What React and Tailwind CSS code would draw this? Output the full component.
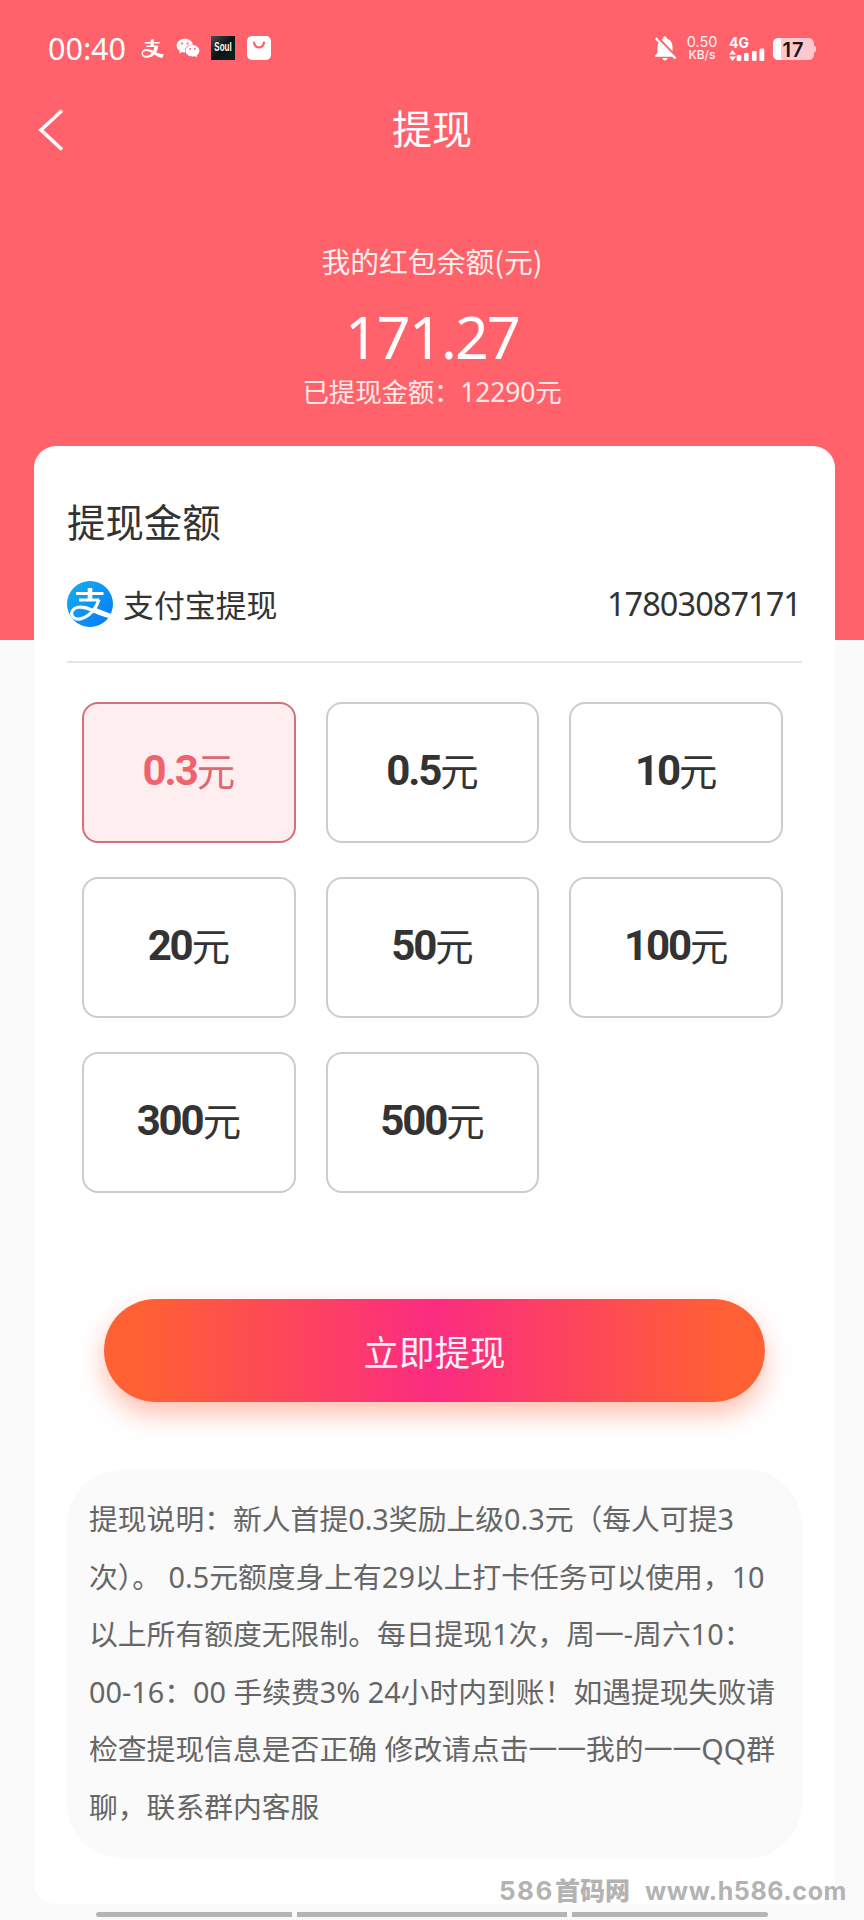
import React from "react";
import { AiOutlineAlipay, AiFillWechat } from "react-icons/ai";
import { MdNotificationsOff } from "react-icons/md";

const amounts = ["0.3", "0.5", "10", "20", "50", "100", "300", "500"];

const notes = [
  "提现说明：新人首提0.3奖励上级0.3元（每人可提3",
  "次）。 0.5元额度身上有29以上打卡任务可以使用，10",
  "以上所有额度无限制。每日提现1次，周一-周六10：",
  "00-16：00 手续费3% 24小时内到账！如遇提现失败请",
  "检查提现信息是否正确 修改请点击一一我的一一QQ群",
  "聊，联系群内客服",
];

function AlipayLogo() {
  return (
    <svg className="h-[46px] w-[46px] shrink-0" viewBox="0 0 46 46" fill="none">
      <defs>
        <linearGradient id="ali" x1="0" y1="0" x2="1" y2="1">
          <stop offset="0" stopColor="#12b0ee" />
          <stop offset="1" stopColor="#0878fa" />
        </linearGradient>
        <clipPath id="disc">
          <circle cx="23" cy="23" r="23" />
        </clipPath>
      </defs>
      <circle cx="23" cy="23" r="23" fill="url(#ali)" />
      <g clipPath="url(#disc)" stroke="#fff">
        <path d="M23 7v12" strokeWidth="4.600" />
        <path d="M9 12.500h27.500M12 19h20" strokeWidth="2.800" />
        <path d="M32 18.500c-2 6.500-6 12-10.500 15.500C16 38.300 10 39 6.800 36.800c-4-3.200-2.200-9.300 4.300-10.500 5.500-1 10.500 1.300 17 4.200 6 2.800 11 4.300 18 6" strokeWidth="3.200" />
        <path d="M26 28c6 3.200 13 5.500 20 7.500" strokeWidth="4.400" />
      </g>
    </svg>
  );
}

function StatusBar() {
  return (
    <div className="flex h-[96px] items-center pl-[48px] pr-[48px] text-white">
      <span className="w-[80px] text-[30.500px] leading-none">00:40</span>
      <AiOutlineAlipay className="ml-[12px] h-[25px] w-[25px]" />
      <AiFillWechat className="ml-[10px] h-[26px] w-[26px]" />
      <span className="ml-[10px] flex h-[24px] w-[24px] items-center justify-center bg-gradient-to-br from-[#4a4d4e] via-[#0d1415] to-[#10201f] font-['Liberation_Sans',sans-serif] text-[8px] font-bold leading-none">
        <span className="scale-y-150">Soul</span>
      </span>
      <svg className="ml-[12px] h-[24px] w-[24px]" viewBox="0 0 24 24">
        <rect width="24" height="24" rx="5" fill="#fff" />
        <path d="M7 6.500c1 6.500 9 6.500 10 0" fill="none" stroke="#ff626b" strokeWidth="2.200" strokeLinecap="round" />
      </svg>
      <div className="ml-auto flex items-center">
        <MdNotificationsOff className="h-[30px] w-[30px]" />
        <div className="ml-[5px] flex w-[34px] flex-col items-center font-['Inter',sans-serif] leading-none text-[#fff0f0]">
          <span className="text-[14.500px] leading-[13px]">0.50</span>
          <span className="text-[12px] font-medium leading-[13px]">KB/s</span>
        </div>
        <svg className="ml-[10px] h-[26px] w-[36px] overflow-visible" viewBox="0 -2 36 26" fill="#fff">
          <text x="0" y="11" fontSize="14" fontWeight="700" textLength="20" fontFamily="Inter, sans-serif">4G</text>
          <path d="M0 17.500L3.500 13L7 17.500ZM0 19.500L3.500 24L7 19.500Z" />
          <rect x="7.700" y="18" width="4.600" height="6" rx="1.200" />
          <rect x="15" y="16" width="4.600" height="8" rx="1.200" />
          <rect x="23" y="14" width="4.600" height="10" rx="1.200" />
          <rect x="30.500" y="11.500" width="4.800" height="12.500" rx="1.200" />
        </svg>
        <svg className="ml-[8px] mt-[2px] h-[22px] w-[43px]" viewBox="0 0 43 22">
          <rect width="41" height="22" rx="5.500" fill="#ffc8cd" />
          <path d="M41 7.500c3 1 3 6 0 7z" fill="#ffc8cd" />
          <path d="M5.500 0H8v22H5.500A5.500 5.500 0 0 1 0 16.500v-11A5.500 5.500 0 0 1 5.500 0z" fill="#fff" />
          <text x="9.500" y="18.500" fontSize="20" fontWeight="600" textLength="21" fill="#241316" fontFamily="Inter, sans-serif">17</text>
        </svg>
      </div>
    </div>
  );
}

export default function App() {
  return (
    <div className="relative h-[1920px] w-[864px] overflow-hidden bg-[#fafafa] font-['Noto_Sans','Noto_Sans_CJK_SC',sans-serif] text-[#333]">
      <header className="h-[640px] bg-[#ff626b] text-white">
        <StatusBar />
        <div className="grid h-[68px] grid-cols-[1fr_auto_1fr] items-center">
          <svg className="ml-[38px] h-[42px] w-[26px]" viewBox="0 0 26 42" fill="none" stroke="#fff" strokeWidth="3.600">
            <path d="M24 1.500L3 21L24 40.500" />
          </svg>
          <h1 className="pb-[6px] font-['Noto_Sans_CJK_SC',sans-serif] text-[40px] leading-none">提现</h1>
        </div>
        <div className="flex flex-col items-center pt-[77px]">
          <p className="font-['Noto_Sans_CJK_SC',sans-serif] text-[28.800px] leading-[40px] text-[#fff0ee]">我的红包余额(元)</p>
          <p className="mt-[19px] text-[59px] leading-[72px] tracking-[-1.700px]">171.27</p>
          <p className="text-[26.500px] leading-[40px] tracking-[-0.200px] text-[#ffe9e6]">已提现金额：12290元</p>
        </div>
      </header>

      <main className="relative ml-[34px] mr-[29px] -mt-[194px] h-[1458px] rounded-[22px] bg-white px-[33px] pt-[49px]">
        <h2 className="font-['Noto_Sans_CJK_SC',sans-serif] text-[38.400px] leading-[50px]">提现金额</h2>
        <div className="mt-[27px] flex h-[64px] items-center">
          <AlipayLogo />
          <span className="ml-[10px] font-['Noto_Sans_CJK_SC',sans-serif] text-[30.900px] leading-none">支付宝提现</span>
          <span className="ml-auto mr-[1px] text-[32.500px] leading-none tracking-[-0.950px]">17803087171</span>
        </div>
        <div className="mt-[25px] h-[2px] bg-[#e5e5e5]" />

        <div className="ml-[15px] mt-[39px] grid w-[701px] grid-cols-3 gap-x-[30px] gap-y-[34px]">
          {amounts.map((a, i) => (
            <button
              key={a}
              className={
                "flex h-[141px] items-center justify-center rounded-[16px] border-2 pb-[3px] leading-none " +
                (i === 0 ? "border-[#d46f7b] bg-[#ffeef0] text-[#dc6873]" : "border-[#ccc] bg-white text-[#333]")
              }
            >
              <span className={"font-['Roboto',sans-serif] text-[42px] font-bold tracking-[-2.100px] " + (i === 0 ? "text-[#f0626d]" : "")}>{a}</span>
              <span className="pb-[4px] font-['Noto_Sans_CJK_SC',sans-serif] text-[38.400px]">元</span>
            </button>
          ))}
        </div>

        <button className="ml-[37px] mt-[106px] flex h-[103px] w-[661px] items-center justify-center rounded-full bg-[linear-gradient(90deg,#ff6034_0%,#ff6034_6%,#fb2c81_50%,#ff6034_94%,#ff6034_100%)] font-['Noto_Sans_CJK_SC',sans-serif] text-[35.500px] leading-none text-[#fff0fa] shadow-[0_12px_26px_rgba(255,96,52,0.4)]">
          立即提现
        </button>

        <section className="mt-[68px] h-[388px] w-[735px] rounded-[54px] bg-[#fafafa] pl-[22px] pt-[20px] text-[28.800px] leading-[57.600px] text-[#666]">
          {notes.map((line) => (
            <p key={line} className="whitespace-pre">{line}</p>
          ))}
        </section>
      </main>

      <div className="absolute left-[499px] top-[1874px] flex items-center whitespace-pre font-['Inter','Noto_Sans_CJK_SC',sans-serif] text-[25px] font-bold leading-[34px] text-[#b3b3b3]">
        <span className="w-[56px] text-[26px] tracking-[1.500px]">586</span>
        <span className="w-[90px] text-[25px] font-black">首码网</span>
        <span className="tracking-[0.600px]">www.h586.com</span>
      </div>
      <div className="absolute left-[96px] top-[1912px] flex gap-[5px]">
        <span className="h-[5px] w-[196px] rounded-l-full bg-[#b5b5b5]" />
        <span className="h-[5px] w-[270px] bg-[#b5b5b5]" />
        <span className="h-[5px] w-[196px] rounded-r-full bg-[#b5b5b5]" />
      </div>
    </div>
  );
}
